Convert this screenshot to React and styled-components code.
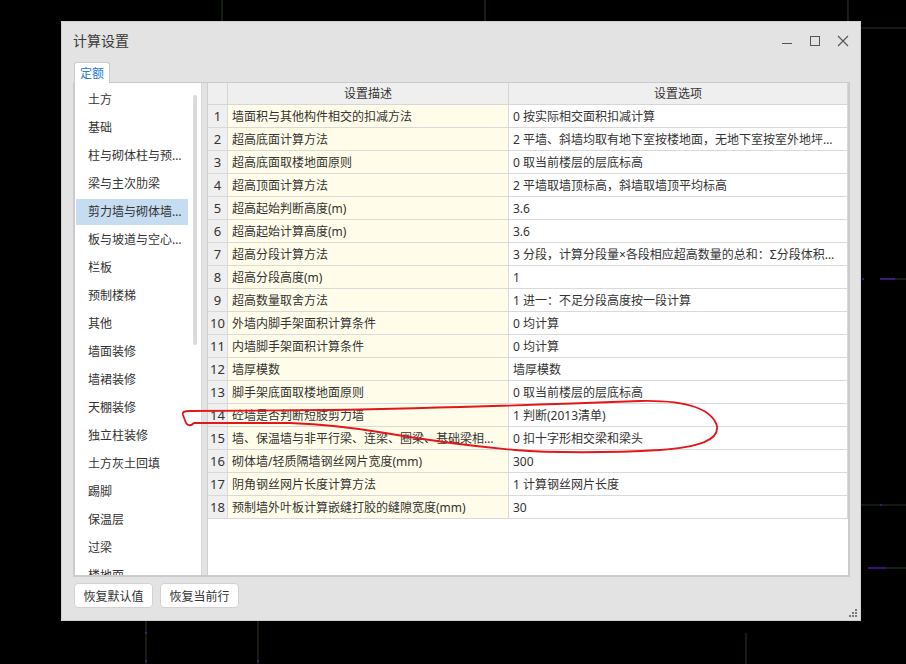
import React from 'react';
import styled, { createGlobalStyle } from 'styled-components';

const GlobalStyle = createGlobalStyle`
  html, body { margin: 0; padding: 0; background: #000; }
  body {
    width: 906px; height: 664px; overflow: hidden;
    font-family: "Noto Sans", "Noto Sans CJK SC", sans-serif;
    color: #333;
  }
  * { box-sizing: border-box; }
`;

const Desktop = styled.div`
  position: relative;
  width: 906px;
  height: 664px;
  background: #000;
  padding: 21px 0 0 61px;
`;

const Backdrop = styled.svg`
  position: absolute;
  left: 0;
  top: 0;
`;

const Annotation = styled.svg`
  position: absolute;
  left: 0;
  top: 0;
  z-index: 3;
  pointer-events: none;
`;

const Dialog = styled.div`
  position: relative;
  z-index: 1;
  width: 800px;
  height: 600px;
  background: #e3e3e3;
  border: 1px solid #d0d0d0;
  padding: 0 10px 0 11px;
  display: flex;
  flex-direction: column;
`;

const TitleBar = styled.div`
  height: 40px;
  padding-bottom: 4px;
  display: flex;
  align-items: center;
  justify-content: space-between;
`;

const Title = styled.div`
  font-size: 14px;
  color: #3a3a3a;
`;

const Controls = styled.div`
  display: flex;
  margin-right: -7px;
  margin-top: 2px;
`;

const CtrlButton = styled.div`
  width: 28px;
  height: 20px;
  display: flex;
  align-items: center;
  justify-content: center;
`;

const TabBar = styled.div`
  height: 20px;
  display: flex;
  align-items: flex-end;
  padding-left: 1px;
`;

const Tab = styled.div`
  position: relative;
  z-index: 1;
  width: 36px;
  height: 21px;
  margin-bottom: -1px;
  background: #fff;
  border: 1px solid #cacacf;
  border-bottom: none;
  border-radius: 3px 3px 0 0;
  color: ${p => (p.$active ? '#2a7ad6' : '#333')};
  font-size: 12px;
  display: flex;
  align-items: center;
  justify-content: center;
`;

const Frame = styled.div`
  height: 495px;
  border: 2px solid #cacacf;
  border-top-width: 1px;
  display: flex;
  gap: 5px;
  background: #e3e3e3;
`;

const ListPane = styled.div`
  width: 127px;
  background: #fff;
  border-right: 1px solid #d8d8d8;
  display: flex;
  overflow: hidden;
`;

const ListItems = styled.div`
  width: 118px;
  padding: 4px 0 0 1px;
  display: flex;
  flex-direction: column;
  gap: 2px;
`;

const ListItem = styled.div`
  flex: none;
  width: 112px;
  height: 26px;
  padding: 0 5px 0 12px;
  font-size: 12px;
  line-height: 26px;
  color: #333;
  white-space: nowrap;
  overflow: hidden;
  text-overflow: ellipsis;
  background: ${p => (p.$selected ? '#c6dcf1' : 'transparent')};
`;

const ScrollTrack = styled.div`
  width: 4px;
  padding-top: 12px;
`;

const ScrollThumb = styled.div`
  width: 4px;
  height: 250px;
  border-radius: 2px;
  background: #dadada;
`;

const TablePane = styled.div`
  flex: 1;
  background: #fff;
  border-left: 1px solid #cfcfcf;
  overflow: hidden;
`;

const Grid = styled.div`
  display: grid;
  grid-template-columns: 20px 281px 1fr;
`;

const HeadCell = styled.div`
  height: 22px;
  background: #efefef;
  border-right: 1px solid #d6d6d6;
  border-bottom: 1px solid #d6d6d6;
  font-size: 12px;
  line-height: 22px;
  text-align: center;
  color: #333;
`;

const Cell = styled.div`
  height: 23px;
  border-right: 1px solid #d9d9d9;
  border-bottom: 1px solid #d9d9d9;
  line-height: 23px;
  color: #333;
  white-space: nowrap;
  overflow: hidden;
  text-overflow: ellipsis;
  padding: ${p => (p.$kind === 'num' ? '0' : '0 6px 0 4px')};
  text-align: ${p => (p.$kind === 'num' ? 'center' : 'left')};
  background: ${p =>
    p.$kind === 'num' ? '#efefef' : p.$kind === 'desc' ? '#fffde9' : '#fff'};
  font-size: ${p => (p.$kind === 'num' ? '13px' : '12px')};
`;

const ButtonRow = styled.div`
  display: flex;
  gap: 7px;
  padding: 6px 0 0 1px;
`;

const Button = styled.button`
  width: 79px;
  height: 25px;
  background: #fff;
  border: 1px solid #d2d2d2;
  border-radius: 4px;
  font-family: "Noto Sans", "Noto Sans CJK SC", sans-serif;
  font-size: 12px;
  color: #333;
  padding: 0;
`;

const Grip = styled.svg`
  position: absolute;
  right: 2px;
  bottom: 2px;
`;

const categories = [
  '土方', '基础', '柱与砌体柱与预制柱', '梁与主次肋梁', '剪力墙与砌体墙与预制墙',
  '板与坡道与空心楼盖板', '栏板', '预制楼梯', '其他', '墙面装修', '墙裙装修',
  '天棚装修', '独立柱装修', '土方灰土回填', '踢脚', '保温层', '过梁', '楼地面', '屋面',
];

const rows = [
  ['墙面积与其他构件相交的扣减方法', '0 按实际相交面积扣减计算'],
  ['超高底面计算方法', '2 平墙、斜墙均取有地下室按楼地面，无地下室按室外地坪标高'],
  ['超高底面取楼地面原则', '0 取当前楼层的层底标高'],
  ['超高顶面计算方法', '2 平墙取墙顶标高，斜墙取墙顶平均标高'],
  ['超高起始判断高度(m)', '3.6'],
  ['超高起始计算高度(m)', '3.6'],
  ['超高分段计算方法', '3 分段，计算分段量×各段相应超高数量的总和：Σ分段体积×超高数量'],
  ['超高分段高度(m)', '1'],
  ['超高数量取舍方法', '1 进一：不足分段高度按一段计算'],
  ['外墙内脚手架面积计算条件', '0 均计算'],
  ['内墙脚手架面积计算条件', '0 均计算'],
  ['墙厚模数', '墙厚模数'],
  ['脚手架底面取楼地面原则', '0 取当前楼层的层底标高'],
  ['砼墙是否判断短肢剪力墙', '1 判断(2013清单)'],
  ['墙、保温墙与非平行梁、连梁、圈梁、基础梁相交扣减', '0 扣十字形相交梁和梁头'],
  ['砌体墙/轻质隔墙钢丝网片宽度(mm)', '300'],
  ['阴角钢丝网片长度计算方法', '1 计算钢丝网片长度'],
  ['预制墙外叶板计算嵌缝打胶的缝隙宽度(mm)', '30'],
];

function CadLines() {
  const g = '#233423';
  const v = '#4b1a9a';
  return (
    <Backdrop width="906" height="664" viewBox="0 0 906 664">
      <g stroke={g} strokeWidth="1.2">
        <line x1="222" y1="0" x2="222" y2="21" />
        <line x1="485" y1="0" x2="485" y2="21" />
        <line x1="848" y1="0" x2="848" y2="21" />
        <line x1="146" y1="620" x2="146" y2="664" />
        <line x1="258" y1="620" x2="258" y2="664" />
        <line x1="746" y1="633" x2="746" y2="664" />
        <line x1="861" y1="28" x2="906" y2="28" />
        <line x1="880" y1="279" x2="906" y2="279" />
        <line x1="861" y1="505" x2="906" y2="505" />
        <line x1="886" y1="568" x2="906" y2="568" />
      </g>
      <g stroke={v} strokeWidth="1.5">
        <line x1="862" y1="279" x2="864" y2="279" />
        <line x1="880" y1="279" x2="895" y2="279" />
        <line x1="868" y1="568" x2="886" y2="568" />
        <line x1="146" y1="632" x2="146" y2="634" />
        <line x1="146" y1="660" x2="146" y2="662" />
        <line x1="258" y1="660" x2="258" y2="662" />
        <line x1="880" y1="505" x2="882" y2="505" />
      </g>
    </Backdrop>
  );
}

export default function App() {
  return (
    <>
      <GlobalStyle />
      <Desktop>
        <CadLines />
        <Dialog>
          <TitleBar>
            <Title>计算设置</Title>
            <Controls>
              <CtrlButton>
                <svg width="12" height="12" viewBox="0 0 12 12">
                  <line x1="1" y1="8.5" x2="11" y2="8.5" stroke="#555" strokeWidth="1" />
                </svg>
              </CtrlButton>
              <CtrlButton>
                <svg width="12" height="12" viewBox="0 0 12 12">
                  <rect x="1.5" y="1.5" width="9" height="9" fill="none" stroke="#555" strokeWidth="1" />
                </svg>
              </CtrlButton>
              <CtrlButton>
                <svg width="12" height="12" viewBox="0 0 12 12">
                  <path d="M1 1 L11 11 M11 1 L1 11" stroke="#555" strokeWidth="1.1" />
                </svg>
              </CtrlButton>
            </Controls>
          </TitleBar>
          <TabBar>
            <Tab $active>定额</Tab>
          </TabBar>
          <Frame>
            <ListPane>
              <ListItems>
                {categories.map((c, i) => (
                  <ListItem key={c} $selected={i === 4}>{c}</ListItem>
                ))}
              </ListItems>
              <ScrollTrack>
                <ScrollThumb />
              </ScrollTrack>
            </ListPane>
            <TablePane>
              <Grid>
                <HeadCell />
                <HeadCell>设置描述</HeadCell>
                <HeadCell>设置选项</HeadCell>
                {rows.map(([d, o], i) => (
                  <React.Fragment key={i}>
                    <Cell $kind="num">{i + 1}</Cell>
                    <Cell $kind="desc">{d}</Cell>
                    <Cell $kind="opt">{o}</Cell>
                  </React.Fragment>
                ))}
              </Grid>
            </TablePane>
          </Frame>
          <ButtonRow>
            <Button>恢复默认值</Button>
            <Button>恢复当前行</Button>
          </ButtonRow>
          <Grip width="10" height="10" viewBox="0 0 10 10">
            <g fill="#7a7a7a">
              <rect x="7" y="1" width="2" height="2" />
              <rect x="4" y="4" width="2" height="2" />
              <rect x="7" y="4" width="2" height="2" />
              <rect x="1" y="7" width="2" height="2" />
              <rect x="4" y="7" width="2" height="2" />
              <rect x="7" y="7" width="2" height="2" />
            </g>
          </Grip>
        </Dialog>
        <Annotation width="906" height="664" viewBox="0 0 906 664">
          <path
            d="M194 423 C191 426 188 426 186 423 L183 415 C182 412 184 411 190 411 L330 410 C450 408 560 404 640 401 C690 400 712 410 717 426 C719 440 700 447 660 450 C610 453 550 453 515 450 C470 446 420 439 385 433 C350 427 320 424 290 423 L194 423"
            fill="none"
            stroke="#e3161b"
            strokeWidth="1.8"
            strokeLinecap="round"
            strokeLinejoin="round"
          />
        </Annotation>
      </Desktop>
    </>
  );
}
